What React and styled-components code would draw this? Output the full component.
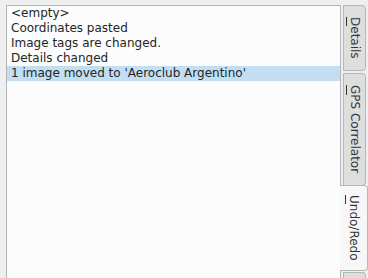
import React from "react"
import styled, { createGlobalStyle } from "styled-components"

const GlobalStyle = createGlobalStyle`
  html, body {
    margin: 0;
    padding: 0;
    background: #efefef;
  }
  body {
    font-family: 'DejaVu Sans', 'Liberation Sans', sans-serif;
    font-size: 12px;
    color: #232627;
  }
`

const Window = styled.div`
  width: 368px;
  height: 278px;
  overflow: hidden;
  display: flex;
  align-items: flex-start;
  box-sizing: border-box;
  padding: 5px 0 0 6px;
`

const ListBox = styled.div`
  flex: 1;
  height: 300px;
  background: #fcfcfc;
  border: 1px solid #b4b5b6;
`

const Row = styled.div`
  height: 15px;
  line-height: 15px;
  padding-left: 4px;
  white-space: nowrap;
  background: ${(p) => (p.selected ? "#c2def3" : "transparent")};
`

const TabBar = styled.div`
  width: 28px;
  flex-shrink: 0;
  display: flex;
  flex-direction: column;
  margin-left: -1px;
`

const Tab = styled.div`
  writing-mode: vertical-rl;
  box-sizing: border-box;
  flex-shrink: 0;
  height: ${(p) => p.h}px;
  margin-top: ${(p) => p.mt}px;
  margin-left: ${(p) => (p.active ? 0 : 3)}px;
  margin-right: ${(p) => (p.active ? 0 : 2)}px;
  background: ${(p) => (p.active ? "#f7f7f7" : "#dedede")};
  border: 1px solid #b6b6b6;
  border-left: ${(p) => (p.active ? "none" : "1px solid #b6b6b6")};
  border-radius: 0 4px 4px 0;
  display: flex;
  align-items: center;
  justify-content: center;
  font-size: 12px;
  color: #31363b;
  position: relative;
  z-index: ${(p) => (p.active ? 2 : 1)};
`

const Key = styled.span`
  border-left: 1px solid #31363b;
  padding-left: 1px;
`

const TabEnd = styled.div`
  flex-shrink: 0;
  height: 10px;
  margin: 1px 2px 0 3px;
  background: #dedede;
  border: 1px solid #b6b6b6;
  border-bottom: none;
  border-radius: 0 4px 0 0;
`

const rows = [
  "<empty>",
  "Coordinates pasted",
  "Image tags are changed.",
  "Details changed",
  "1 image moved to 'Aeroclub Argentino'",
]

const tabs = [
  { key: "D", rest: "etails", h: 66, mt: 0 },
  { key: "G", rest: "PS Correlator", h: 113, mt: 2 },
  { key: "U", rest: "ndo/Redo", h: 86, mt: -1, active: true },
]

export default function App() {
  return (
    <>
      <GlobalStyle />
      <Window>
        <ListBox>
          {rows.map((r, i) => (
            <Row key={r} selected={i === rows.length - 1}>
              {r}
            </Row>
          ))}
        </ListBox>
        <TabBar>
          {tabs.map((t) => (
            <Tab key={t.key} h={t.h} mt={t.mt} active={t.active}>
              <span>
                <Key>{t.key}</Key>
                {t.rest}
              </span>
            </Tab>
          ))}
          <TabEnd />
        </TabBar>
      </Window>
    </>
  )
}
